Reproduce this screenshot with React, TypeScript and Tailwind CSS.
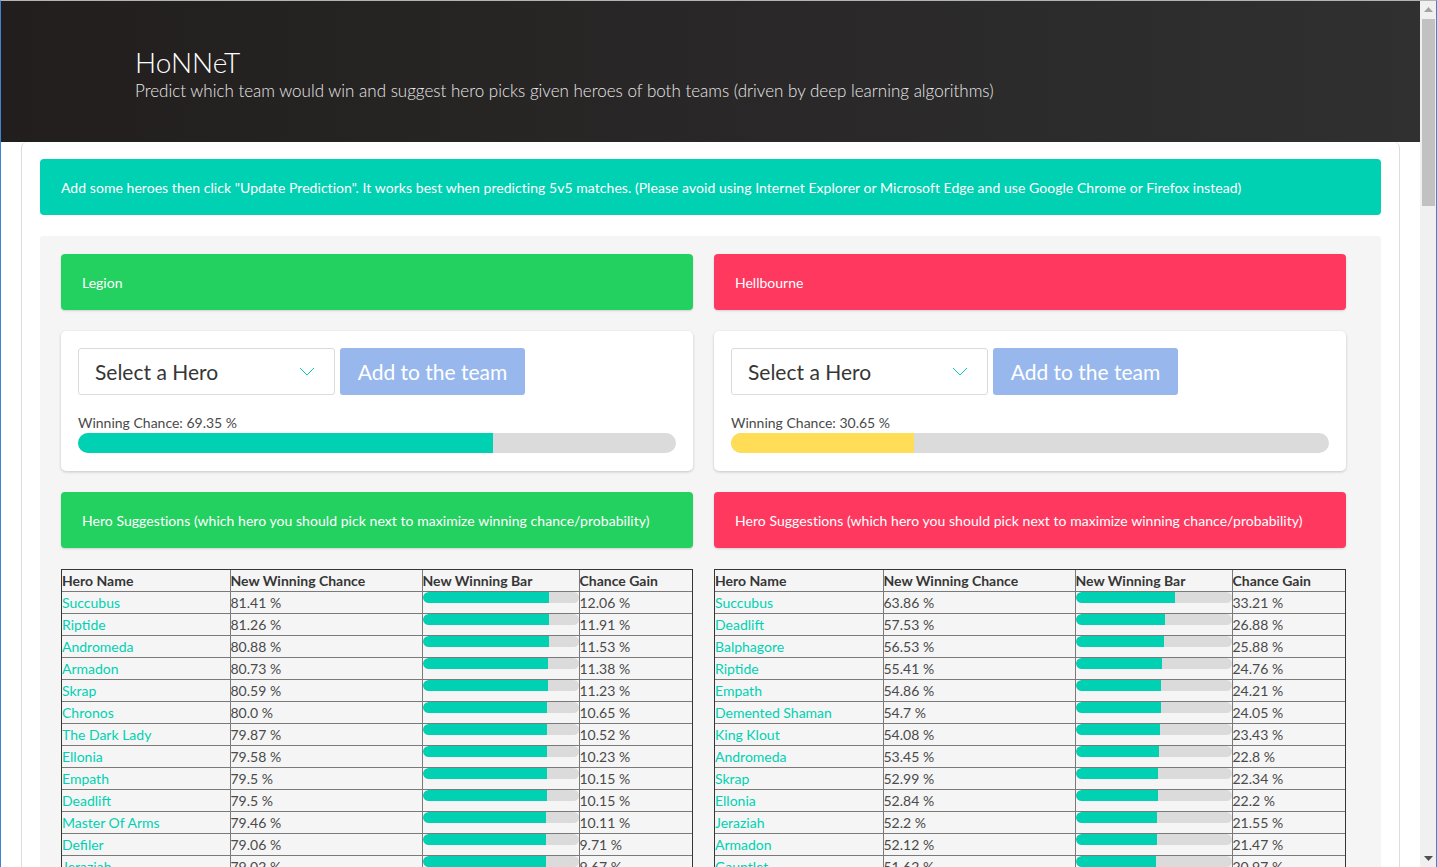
import React from "react";

type Row = { name: string; chance: number; gain: string; chanceText: string };

const legionRows: Row[] = [
  ["Succubus", "81.41", "12.06"],
  ["Riptide", "81.26", "11.91"],
  ["Andromeda", "80.88", "11.53"],
  ["Armadon", "80.73", "11.38"],
  ["Skrap", "80.59", "11.23"],
  ["Chronos", "80.0", "10.65"],
  ["The Dark Lady", "79.87", "10.52"],
  ["Ellonia", "79.58", "10.23"],
  ["Empath", "79.5", "10.15"],
  ["Deadlift", "79.5", "10.15"],
  ["Master Of Arms", "79.46", "10.11"],
  ["Defiler", "79.06", "9.71"],
  ["Jeraziah", "79.02", "9.67"],
  ["Gauntlet", "78.91", "9.56"],
].map(([name, c, g]) => ({ name, chance: parseFloat(c), chanceText: c, gain: g }));

const hellRows: Row[] = [
  ["Succubus", "63.86", "33.21"],
  ["Deadlift", "57.53", "26.88"],
  ["Balphagore", "56.53", "25.88"],
  ["Riptide", "55.41", "24.76"],
  ["Empath", "54.86", "24.21"],
  ["Demented Shaman", "54.7", "24.05"],
  ["King Klout", "54.08", "23.43"],
  ["Andromeda", "53.45", "22.8"],
  ["Skrap", "52.99", "22.34"],
  ["Ellonia", "52.84", "22.2"],
  ["Jeraziah", "52.2", "21.55"],
  ["Armadon", "52.12", "21.47"],
  ["Gauntlet", "51.62", "20.97"],
  ["Chronos", "51.4", "20.75"],
].map(([name, c, g]) => ({ name, chance: parseFloat(c), chanceText: c, gain: g }));

function TeamPanel({
  title,
  color,
  chance,
  fill,
  rows,
}: {
  title: string;
  color: string;
  chance: string;
  fill: string;
  rows: Row[];
}) {
  const pct = parseFloat(chance);
  return (
    <div className="flex flex-col gap-[21px] min-w-0">
      <div className={`h-[56px] rounded-[4px] shadow-[0_1px_2px_rgba(10,10,10,0.15)] flex items-center px-[21px] text-white text-[14px] ${color}`}>
        {title}
      </div>

      <div className="h-[140px] bg-white rounded-[5px] shadow-[0_1px_3px_rgba(10,10,10,0.2)] px-[17px] pt-[17px]">
        <div className="flex gap-[5px]">
          <div className="w-[257px] h-[47px] border border-[#dbdbdb] rounded-[3px] bg-white flex items-center justify-between pl-[16px] pr-[19px]">
            <span className="text-[21px] text-[#363636]">Select a Hero</span>
            <svg width="16" height="9" viewBox="0 0 16 9">
              <polyline points="1,1 8,8 15,1" fill="none" stroke="#00d1b2" strokeWidth="1" />
            </svg>
          </div>
          <button className="w-[185px] h-[47px] rounded-[3px] bg-[#98b8ed] text-white text-[21px]">
            Add to the team
          </button>
        </div>
        <div className="mt-[19px] text-[14px] leading-[18px] text-[#4a4a4a]">
          Winning Chance: {chance} %
        </div>
        <div className="mt-[1px] h-[20px] rounded-full bg-[#dbdbdb] overflow-hidden">
          <div className={`h-full ${fill}`} style={{ width: `${pct}%` }} />
        </div>
      </div>

      <div className={`h-[56px] rounded-[4px] shadow-[0_1px_2px_rgba(10,10,10,0.15)] flex items-center px-[21px] text-white text-[14px] tracking-[0.05px] ${color}`}>
        Hero Suggestions (which hero you should pick next to maximize winning chance/probability)
      </div>

      <div className="border border-[#363636]">
        <table className="w-full table-fixed border-collapse text-[14px] leading-[21px]">
          <colgroup>
            <col className="w-[168px]" />
            <col className="w-[192px]" />
            <col className="w-[157px]" />
            <col />
          </colgroup>
          <thead>
            <tr className="h-[21px] text-left text-[#363636] font-bold">
              <th className="p-0 font-bold">Hero Name</th>
              <th className="p-0 font-bold border-l border-[#7a7a7a]">New Winning Chance</th>
              <th className="p-0 font-bold border-l border-[#7a7a7a]">New Winning Bar</th>
              <th className="p-0 font-bold border-l border-[#7a7a7a]">Chance Gain</th>
            </tr>
          </thead>
          <tbody className="text-[#4a4a4a]">
            {rows.map((r) => (
              <tr key={r.name} className="h-[22px] border-t border-[#7a7a7a]">
                <td className="p-0 text-[#00d1b2] whitespace-nowrap">{r.name}</td>
                <td className="p-0 border-l border-[#7a7a7a]">{r.chanceText} %</td>
                <td className="p-0 border-l border-[#7a7a7a] align-top">
                  <div className="h-[11px] rounded-full bg-[#dbdbdb] overflow-hidden">
                    <div className="h-full bg-[#00d1b2] rounded-l-full" style={{ width: `${r.chance}%` }} />
                  </div>
                </td>
                <td className="p-0 border-l border-[#7a7a7a]">{r.gain} %</td>
              </tr>
            ))}
          </tbody>
        </table>
      </div>
    </div>
  );
}

export default function App() {
  return (
    <div className="h-[867px] overflow-hidden flex bg-white border-t border-t-[#b4b4b4] border-l border-l-[#3f83d4] border-r border-r-[#3f83d4] font-['Lato','Liberation_Sans',sans-serif]">
      <div className="flex-1 min-w-0 flex flex-col">
        <header className="h-[141px] shrink-0 bg-gradient-to-r from-[#221e1e] to-[#303030] pl-[134px] pt-[44px] text-white">
          <h1 className="text-[28px] leading-[34px] font-light">HoNNeT</h1>
          <p className="text-[17px] leading-[24px] font-light text-[#e8e8e8]">
            Predict which team would win and suggest hero picks given heroes of both teams (driven by deep learning algorithms)
          </p>
        </header>

        <div className="px-[20px]">
          <div className="border-x border-[#dcdcdc] rounded-t-[6px] px-[18px] pt-[17px]">
            <div className="h-[56px] rounded-[4px] bg-[#00d1b2] flex items-center px-[21px] text-white text-[14px] tracking-[0.05px]">
              Add some heroes then click "Update Prediction". It works best when predicting 5v5 matches. (Please avoid using Internet Explorer or Microsoft Edge and use Google Chrome or Firefox instead)
            </div>

            <div className="mt-[21px] bg-[#f5f5f5] rounded-t-[3px] pt-[18px] pl-[21px] pr-[35px] grid grid-cols-2 gap-[21px]">
              <TeamPanel title="Legion" color="bg-[#23d160]" chance="69.35" fill="bg-[#00d1b2]" rows={legionRows} />
              <TeamPanel title="Hellbourne" color="bg-[#ff3860]" chance="30.65" fill="bg-[#ffdd57]" rows={hellRows} />
            </div>
          </div>
        </div>
      </div>

      <div className="w-[16px] shrink-0 bg-[#f0f0f0] flex flex-col items-center">
        <svg width="9" height="5" viewBox="0 0 9 5" className="mt-[6px]">
          <polygon points="0,5 4.5,0 9,5" fill="#a3a3a3" />
        </svg>
        <div className="mt-[7px] w-[13px] h-[187px] bg-[#c1c1c1]" />
        <div className="flex-1" />
        <svg width="9" height="5" viewBox="0 0 9 5" className="mb-[6px]">
          <polygon points="0,0 9,0 4.5,5" fill="#505050" />
        </svg>
      </div>
    </div>
  );
}
